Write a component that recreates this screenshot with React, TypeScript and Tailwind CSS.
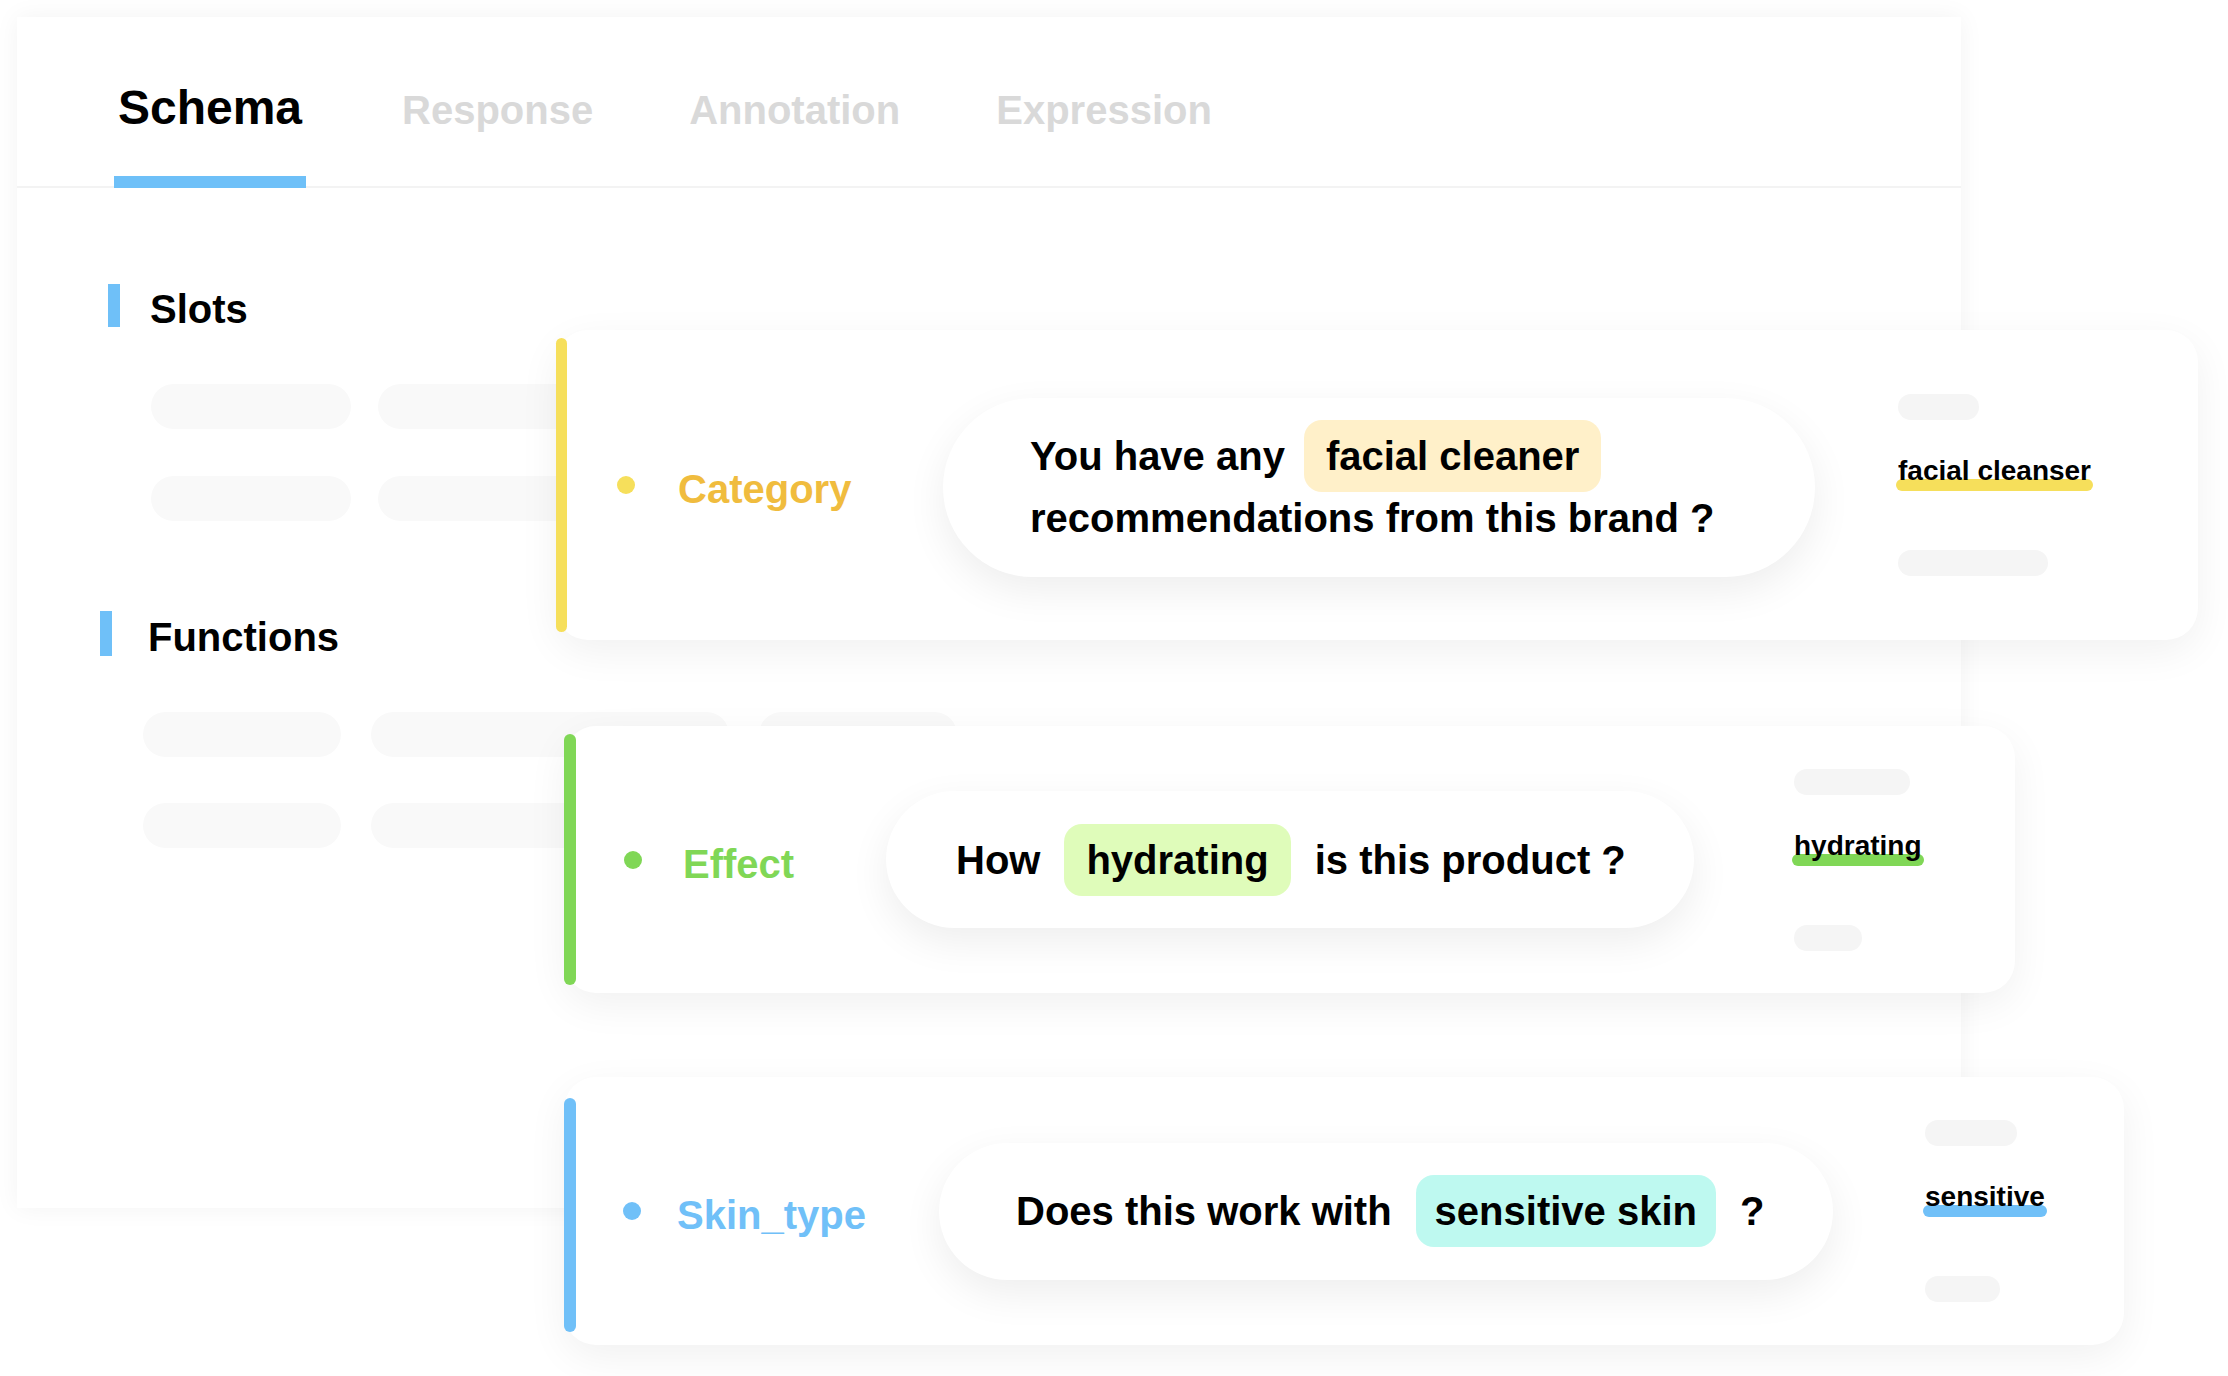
import { ReactNode } from 'react';

function Pill({ className }: { className: string }) {
  return <div className={`h-[45px] rounded-full bg-[#f9f9f9] ${className}`} />;
}

function Section({ title, barClass, textClass, children }: { title: string; barClass: string; textClass: string; children: ReactNode }) {
  return (
    <div className="flex flex-col">
      <div className={`flex items-center ${barClass}`}>
        <div className="w-[12px] self-stretch bg-[#6fc0f8]" />
        <div className={`pt-[6px] text-[40px] font-bold leading-none text-black ${textClass}`}>{title}</div>
      </div>
      {children}
    </div>
  );
}

function Mark({ text, color }: { text: string; color: string }) {
  return (
    <div className="relative h-[28px] text-[28px] font-bold leading-[28px] text-black">
      <div className={`absolute -left-[2px] -right-[2px] top-[22px] h-[12px] rounded-full ${color}`} />
      <span className="relative">{text}</span>
    </div>
  );
}

function RightCol({ top, bottom, text, color, className }: { top: string; bottom: string; text: string; color: string; className: string }) {
  return (
    <div className={`flex flex-col items-start ${className}`}>
      <div className={`h-[26px] rounded-full bg-[#f5f5f5] ${top}`} />
      <div className="mt-[37px]">
        <Mark text={text} color={color} />
      </div>
      <div className={`mt-[65px] h-[26px] rounded-full bg-[#f5f5f5] ${bottom}`} />
    </div>
  );
}

function Hl({ children, className }: { children: ReactNode; className: string }) {
  return <div className={`flex h-[72px] items-center rounded-[18px] px-[22px] ${className}`}>{children}</div>;
}

const bubble = 'flex flex-col justify-center rounded-full bg-white shadow-[0_14px_40px_rgba(0,0,0,0.07)] text-[40px] font-bold leading-none text-black';
const card = 'flex items-center rounded-[32px] bg-white shadow-[0_12px_40px_rgba(0,0,0,0.06)]';
const label = 'pt-[8px] text-[40px] font-bold leading-none';

export default function App() {
  return (
    <div className="relative h-[1376px] w-[2228px] overflow-hidden bg-white font-['Liberation_Sans',Arial,sans-serif]">
      {/* Main panel */}
      <div className="ml-[17px] mt-[17px] h-[1191px] w-[1944px] bg-white shadow-[0_0_24px_rgba(0,0,0,0.05)]">
        <div className="flex h-[171px] items-end gap-[96px] border-b-2 border-[#f3f3f3] pl-[97px]">
          <div className="-mb-[2px] flex flex-col items-center">
            <div className="text-[48px] font-bold leading-none text-black">Schema</div>
            <div className="mt-[44px] h-[12px] w-[192px] bg-[#6ec0f8]" />
          </div>
          {['Response', 'Annotation', 'Expression'].map((t) => (
            <div key={t} className="-mb-[2px] flex flex-col">
              <div className="text-[40px] font-bold leading-none text-[#d9d9d9]">{t}</div>
              <div className="mt-[46px] h-[12px]" />
            </div>
          ))}
        </div>

        <div className="flex flex-col pt-[96px]">
          <div className="pl-[91px]">
            <Section title="Slots" barClass="h-[43px]" textClass="ml-[30px]">
              <div className="ml-[43px] mt-[57px] flex flex-col gap-[47px]">
                <div className="flex gap-[27px]">
                  <Pill className="w-[200px]" />
                  <Pill className="w-[260px]" />
                </div>
                <div className="flex gap-[27px]">
                  <Pill className="w-[200px]" />
                  <Pill className="w-[260px]" />
                </div>
              </div>
            </Section>
          </div>
          <div className="mt-[90px] pl-[83px]">
            <Section title="Functions" barClass="h-[45px]" textClass="ml-[36px]">
              <div className="ml-[43px] mt-[56px] flex flex-col gap-[46px]">
                <div className="flex gap-[30px]">
                  <Pill className="w-[198px]" />
                  <Pill className="w-[358px]" />
                  <Pill className="w-[198px]" />
                </div>
                <div className="flex gap-[30px]">
                  <Pill className="w-[198px]" />
                  <Pill className="w-[300px]" />
                </div>
              </div>
            </Section>
          </div>
        </div>
      </div>

      {/* Slot cards laid over the panel */}
      <div className="absolute left-[556px] top-[330px] flex flex-col items-start">
        <div className={`${card} h-[310px] w-[1642px]`}>
          <div className="my-[8px] w-[11px] self-stretch rounded-full bg-[#f6df5b]" />
          <div className="ml-[50px] h-[18px] w-[18px] rounded-full bg-[#f6df5b]" />
          <div className={`${label} ml-[43px] w-[265px] text-[#f0bc3e]`}>Category</div>
          <div className={`${bubble} mt-[4px] h-[179px] w-[872px] pl-[87px]`}>
            <div className="flex h-[62px] items-center gap-[19px]">
              <span>You have any</span>
              <Hl className="bg-[#fff0c9]">facial cleaner</Hl>
            </div>
            <div className="flex h-[62px] items-center">recommendations from this brand ?</div>
          </div>
          <RightCol className="ml-[83px]" top="w-[81px]" bottom="w-[150px]" text="facial cleanser" color="bg-[#f6df5b]" />
        </div>

        <div className={`${card} ml-[8px] mt-[86px] h-[267px] w-[1451px]`}>
          <div className="my-[8px] w-[12px] self-stretch rounded-full bg-[#80d756]" />
          <div className="ml-[48px] h-[18px] w-[18px] rounded-full bg-[#80d756]" />
          <div className={`${label} ml-[41px] w-[203px] text-[#80d756]`}>Effect</div>
          <div className={`${bubble} h-[137px] w-[808px] pl-[70px]`}>
            <div className="flex items-center gap-[24px]">
              <span>How</span>
              <Hl className="bg-[#dffcba]">hydrating</Hl>
              <span>is this product ?</span>
            </div>
          </div>
          <RightCol className="ml-[100px]" top="w-[116px]" bottom="w-[68px]" text="hydrating" color="bg-[#80d756]" />
        </div>

        <div className={`${card} ml-[8px] mt-[84px] h-[268px] w-[1560px]`}>
          <div className="mb-[13px] mt-[21px] w-[12px] self-stretch rounded-full bg-[#70c0f8]" />
          <div className="ml-[47px] h-[18px] w-[18px] rounded-full bg-[#70c0f8]" />
          <div className={`${label} ml-[36px] w-[262px] text-[#70c0f8]`}>Skin_type</div>
          <div className={`${bubble} h-[137px] w-[894px] pl-[77px]`}>
            <div className="flex items-center gap-[24px]">
              <span>Does this work with</span>
              <Hl className="bg-[#bef9f0] !px-[19px]">sensitive skin</Hl>
              <span>?</span>
            </div>
          </div>
          <RightCol className="ml-[92px]" top="w-[92px]" bottom="w-[75px]" text="sensitive" color="bg-[#70c0f8]" />
        </div>
      </div>
    </div>
  );
}
